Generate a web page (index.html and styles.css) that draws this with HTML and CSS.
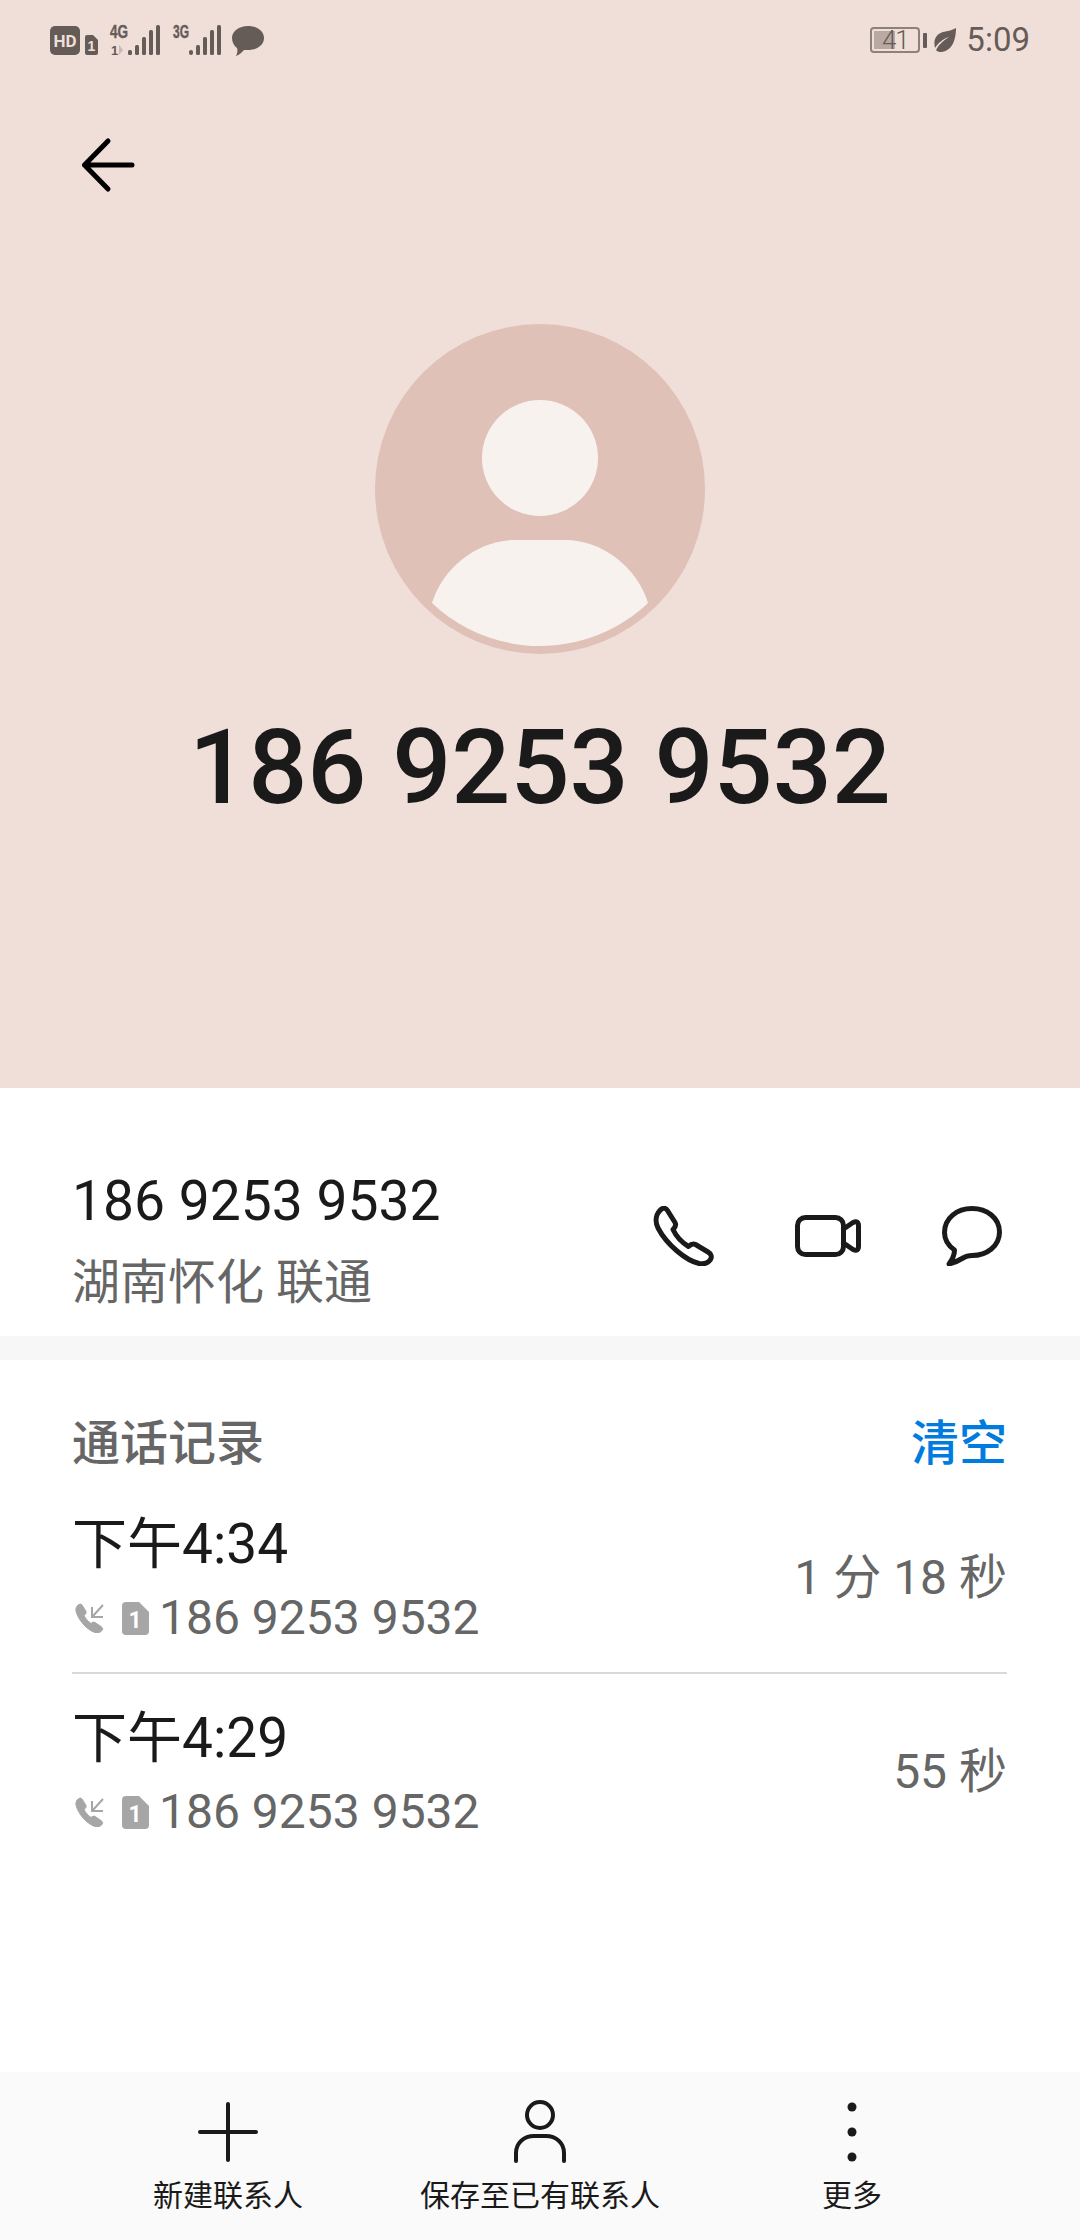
FILE: index.html
```html
<!DOCTYPE html>
<html lang="zh-CN">
<head>
  <meta charset="UTF-8" />
  <title>186 9253 9532</title>
  <link rel="stylesheet" href="styles.css">
</head>
<body>

  <!-- Top coloured part -->
  <div class="hero">
    <div class="statusbar">
      <svg class="status-left" width="216" height="48" viewBox="0 -8 216 48">
        <rect x="0" y="2" width="30" height="29" rx="5" fill="#655b57"/>
        <text x="15" y="23" class="st-hd" text-anchor="middle">HD</text>
        <path d="M35 13a2 2 0 0 1 2-2h6l5 5v13a2 2 0 0 1-2 2h-9a2 2 0 0 1-2-2z" fill="#655b57"/>
        <text x="41.500" y="27" class="st-sim" text-anchor="middle">1</text>
        <text x="60" y="14" class="st-net" textLength="18" lengthAdjust="spacingAndGlyphs">4G</text>
        <text x="61" y="31" class="st-net-sm">1</text>
        <path d="M69 21v10l4-5z" fill="#c9b9b3"/>
        <g fill="#655b57">
          <rect x="78" y="26" width="4" height="5" rx="1.500"/>
          <rect x="85" y="21" width="4" height="10" rx="1.500"/>
          <rect x="92" y="13" width="4" height="18" rx="1.500"/>
          <rect x="99" y="6" width="4" height="25" rx="1.500"/>
          <rect x="106" y="1" width="4" height="30" rx="1.500"/>
        </g>
        <text x="123" y="14" class="st-net" textLength="16" lengthAdjust="spacingAndGlyphs">3G</text>
        <g fill="#655b57">
          <rect x="139" y="26" width="4" height="5" rx="2"/>
          <rect x="146" y="21" width="4" height="10" rx="1.500"/>
          <rect x="153" y="13" width="4" height="18" rx="1.500"/>
          <rect x="160" y="6" width="4" height="25" rx="1.500"/>
          <rect x="167" y="1" width="4" height="30" rx="1.500"/>
        </g>
        <path d="M198 2c9 0 16 5 16 12s-7 12-16 12c-2 0-3 0-4 0-2 2-5 5-8 6 1-2 2-5 1-8-3-2-5-6-5-10 0-7 7-12 16-12z" fill="#655b57"/>
      </svg>
      <div class="status-right">
        <div class="battery">
          <div class="battery-fill"></div>
          <span class="battery-num">41</span>
        </div>
        <div class="battery-tip"></div>
        <svg class="leaf" width="23" height="25" viewBox="0 0 23 25">
          <path d="M22 0C22 12 18 23 7 24c-2 0-4-.5-5-2 3-6 8-10 13-13C9 11 4 15 1 20-1 12 2 6 9 4c5-1 10-2 13-4z" fill="#655b57"/>
        </svg>
        <span class="clock">5:09</span>
      </div>
    </div>

    <div class="backrow">
      <svg width="58" height="58" viewBox="0 0 58 58">
        <path d="M29 5L5.500 29L29 53M5.500 29H53" fill="none" stroke="#000" stroke-width="5" stroke-linecap="round" stroke-linejoin="round"/>
      </svg>
    </div>

    <svg class="avatar" width="330" height="330" viewBox="0 0 330 330">
      <circle cx="165" cy="165" r="165" fill="#dfc1b8"/>
      <circle cx="165" cy="134" r="58" fill="#f8f2ef"/>
      <path d="M57 279C68 243 103 216 140 216H190C227 216 262 243 273 279C245 306 205 322 165 322C125 322 85 306 57 279Z" fill="#f8f2ef"/>
    </svg>

    <h1 class="hero-number">186 9253 9532</h1>
  </div>

  <!-- Number and actions -->
  <div class="info">
    <div class="info-text">
      <div class="info-number">186 9253 9532</div>
      <div class="info-place">湖南怀化 联通</div>
    </div>
    <div class="info-actions">
      <svg width="61" height="60" viewBox="0 0 61 60">
        <path d="M8.500 3C10.500 1.600 13 2 14.500 4.500L22 16.500C23.500 19 22 21.500 20 23.500C23 30 29 36.500 35.500 40.500C37.500 38.500 40 37.200 42.500 38.500L55 46C58.500 48 59 51 57.500 53.500C55 57 51 58.500 46 57.500C33 54.500 14 39 5 22C1.500 14.500 3 7.500 8.500 3Z" class="ic-line"/>
      </svg>
      <svg width="66" height="42" viewBox="0 0 66 42">
        <rect x="2.500" y="2.500" width="46" height="37" rx="8" class="ic-line"/>
        <path d="M48.500 14L58 7.500Q63.500 5 63.500 11V31Q63.500 37 58 34.500L48.500 28" class="ic-line"/>
      </svg>
      <svg width="60" height="60" viewBox="0 0 60 60">
        <path d="M12.500 44C6 39.500 2.500 33 2.500 26.500C2.500 12 15 2.500 30 2.500C45 2.500 57.500 12 57.500 26C57.500 40 45 49.500 30 49.500C27 49.500 24 50 22 51.500C17 54.500 11 57 7 58C10 54 12.500 49 12.500 44Z" class="ic-line"/>
      </svg>
    </div>
  </div>

  <div class="band"></div>

  <!-- Call log -->
  <div class="log">
    <div class="log-head">
      <span class="log-title">通话记录</span>
      <span class="log-clear">清空</span>
    </div>

    <div class="log-row">
      <div>
        <div class="log-time">下午4:34</div>
        <div class="log-sub">
          <svg class="ic-call" width="30" height="30" viewBox="0 0 30 30">
            <path d="M4 1.500c2-1 3 0 4 2l3 5c.5 1.500-.5 3-2 4 1.500 3 4 6 7 8 1.500-1 2.500-2 4-1l6 4c2 1.500 2 3 1 4-2 2-4 3-7 2C12 27 3 17 1 8 .5 5 2 2.500 4 1.500z" fill="#a6a6a6" stroke="#a6a6a6"/>
            <path d="M28 2L17 14M17 4v10h11" fill="none" stroke="#a6a6a6" stroke-width="2"/>
          </svg>
          <svg class="ic-sim" width="27" height="33" viewBox="0 0 27 33">
            <path d="M0 4a4 4 0 0 1 4-4h13l10 10v19a4 4 0 0 1-4 4H4a4 4 0 0 1-4-4z" fill="#a6a6a6"/>
            <text x="13" y="26" class="sim-num" text-anchor="middle">1</text>
          </svg>
          <span>186 9253 9532</span>
        </div>
      </div>
      <div class="log-dur">1 分 18 秒</div>
    </div>

    <div class="log-row last">
      <div>
        <div class="log-time">下午4:29</div>
        <div class="log-sub">
          <svg class="ic-call" width="30" height="30" viewBox="0 0 30 30">
            <path d="M4 1.500c2-1 3 0 4 2l3 5c.5 1.500-.5 3-2 4 1.500 3 4 6 7 8 1.500-1 2.500-2 4-1l6 4c2 1.500 2 3 1 4-2 2-4 3-7 2C12 27 3 17 1 8 .5 5 2 2.500 4 1.500z" fill="#a6a6a6" stroke="#a6a6a6"/>
            <path d="M28 2L17 14M17 4v10h11" fill="none" stroke="#a6a6a6" stroke-width="2"/>
          </svg>
          <svg class="ic-sim" width="27" height="33" viewBox="0 0 27 33">
            <path d="M0 4a4 4 0 0 1 4-4h13l10 10v19a4 4 0 0 1-4 4H4a4 4 0 0 1-4-4z" fill="#a6a6a6"/>
            <text x="13" y="26" class="sim-num" text-anchor="middle">1</text>
          </svg>
          <span>186 9253 9532</span>
        </div>
      </div>
      <div class="log-dur">55 秒</div>
    </div>
  </div>

  <!-- Bottom bar -->
  <div class="bottombar">
    <div class="tool">
      <svg width="64" height="64" viewBox="0 0 64 64">
        <path d="M4 32h56M32 4v56" fill="none" stroke="#1a1a1a" stroke-width="4" stroke-linecap="round"/>
      </svg>
      <span>新建联系人</span>
    </div>
    <div class="tool">
      <svg width="64" height="64" viewBox="0 0 64 64">
        <ellipse cx="32" cy="15" rx="13" ry="13" fill="none" stroke="#1a1a1a" stroke-width="4"/>
        <path d="M8 61V53C8 43 16 36 26 36H38C48 36 56 43 56 53V61" fill="none" stroke="#1a1a1a" stroke-width="4" stroke-linecap="round"/>
      </svg>
      <span>保存至已有联系人</span>
    </div>
    <div class="tool">
      <svg width="64" height="64" viewBox="0 0 64 64">
        <circle cx="32" cy="7" r="4.500" fill="#1a1a1a"/>
        <circle cx="32" cy="32" r="4.500" fill="#1a1a1a"/>
        <circle cx="32" cy="57" r="4.500" fill="#1a1a1a"/>
      </svg>
      <span>更多</span>
    </div>
  </div>

</body>
</html>
```

FILE: styles.css
```css
* {
  box-sizing: border-box;
}

body {
  margin: 0;
  width: 1080px;
  height: 2240px;
  overflow: hidden;
  display: flex;
  flex-direction: column;
  background-color: #fff;
  font-family: Roboto, "Noto Sans CJK SC", sans-serif;
  color: #1a1a1a;
}

/* Top part */
.hero {
  height: 1088px;
  background-color: #f0dfd9;
  display: flex;
  flex-direction: column;
  align-items: center;
}

.statusbar {
  width: 100%;
  height: 80px;
  padding: 16px 50px 0 50px;
  display: flex;
  justify-content: space-between;
  align-items: flex-start;
}

.status-left text {
  font-family: "Liberation Sans", sans-serif;
  font-weight: bold;
}

.status-left .st-hd {
  font-family: Roboto, sans-serif;
  font-size: 17px;
  fill: #f0dfd9;
}

.st-sim {
  font-size: 14px;
  fill: #f0dfd9;
}

.st-net {
  font-size: 18px;
  fill: #655b57;
  stroke: #655b57;
  stroke-width: 0.4;
}

.st-net-sm {
  font-size: 13px;
  fill: #655b57;
}

.status-right {
  display: flex;
  align-items: center;
  height: 32px;
  margin-top: 8px;
  color: #655b57;
}

.battery {
  position: relative;
  width: 50px;
  height: 26px;
  border: 2px solid #8d817c;
  border-radius: 4px;
  display: flex;
  justify-content: center;
  align-items: center;
}

.battery-fill {
  position: absolute;
  left: 2px;
  top: 2px;
  bottom: 2px;
  width: 21px;
  background-color: #b8a9a3;
}

.battery-num {
  position: relative;
  font-size: 26px;
  font-weight: 300;
  line-height: 26px;
  letter-spacing: -1px;
}

.battery-tip {
  width: 4px;
  height: 15px;
  margin-left: 3px;
  background-color: #655b57;
  border-radius: 1px;
}

.leaf {
  margin-left: 7px;
  margin-right: 9px;
}

.clock {
  font-size: 33px;
  line-height: 32px;
}

.backrow {
  width: 100%;
  padding: 56px 0 0 79px;
  display: flex;
}

.avatar {
  margin-top: 130px;
  flex-shrink: 0;
}

.hero-number {
  margin: 54px 0 0;
  font-size: 104px;
  line-height: 120px;
  font-weight: 500;
  color: #1a1a1a;
}

/* Number row */
.info {
  height: 248px;
  padding: 81px 73px 0 72px;
  display: flex;
  justify-content: space-between;
}

.info-number {
  font-size: 55.2px;
  line-height: 64px;
}

.info-place {
  margin-top: 18px;
  font-size: 48px;
  line-height: 64px;
  color: #666;
}

.info-actions {
  width: 349px;
  height: 60px;
  margin-top: 37px;
  margin-right: 5px;
  display: flex;
  justify-content: space-between;
  align-items: center;
}

.ic-line {
  fill: none;
  stroke: #1a1a1a;
  stroke-width: 5;
  stroke-linejoin: round;
  stroke-linecap: round;
}

.band {
  height: 24px;
  background-color: #f7f7f7;
}

/* Call log */
.log {
  padding: 0 73px 0 72px;
}

.log-head {
  height: 120px;
  padding-top: 38px;
  display: flex;
  justify-content: space-between;
  align-items: center;
  font-size: 48px;
}

.log-title {
  color: #666;
  font-weight: 500;
}

.log-clear {
  color: #007be0;
  font-weight: 500;
}

.log-row {
  height: 194px;
  padding-top: 29px;
  border-bottom: 2px solid #d9d9d9;
  display: flex;
  justify-content: space-between;
  align-items: flex-start;
}

.log-row.last {
  border-bottom: none;
}

.log-time {
  font-size: 55px;
  line-height: 70px;
}

.log-sub {
  margin-top: 8px;
  display: flex;
  align-items: center;
  font-size: 48px;
  line-height: 62px;
  color: #666;
}

.ic-call {
  margin: 0 17px 0 3px;
}

.ic-sim {
  margin-right: 10px;
}

.sim-num {
  font-size: 23px;
  font-weight: 700;
  fill: #fff;
}

.log-dur {
  margin-top: 38px;
  font-size: 48px;
  line-height: 62px;
  color: #666;
}

/* Bottom bar */
.bottombar {
  margin-top: auto;
  height: 168px;
  padding-top: 28px;
  background-color: #fafafa;
  display: flex;
  justify-content: center;
}

.tool {
  width: 312px;
  display: flex;
  flex-direction: column;
  align-items: center;
  font-size: 30px;
  line-height: 40px;
}

.tool span {
  margin-top: 12px;
}
```
